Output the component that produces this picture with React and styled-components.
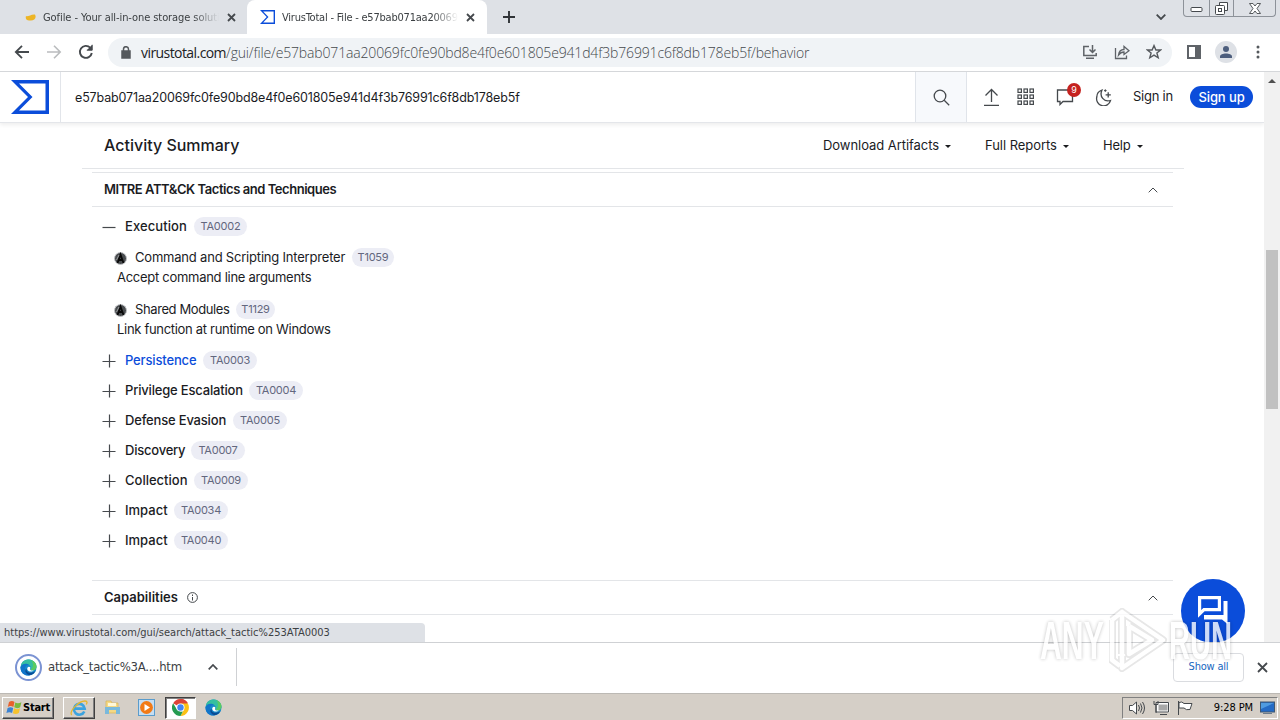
import React from 'react';
import styled, { createGlobalStyle, css } from 'styled-components';

// -------------------- Data -------------------- //

const HASH = 'e57bab071aa20069fc0fe90bd8e4f0e601805e941d4f3b76991c6f8db178eb5f';

const techniques = [
  { name: 'Command and Scripting Interpreter', width: 210, ls: -0.2, id: 'T1059', chip: 42, note: 'Accept command line arguments', noteLs: -0.28 },
  { name: 'Shared Modules', width: 94, ls: -0.4, id: 'T1129', chip: 39, note: 'Link function at runtime on Windows', noteLs: -0.31 }
];

const tactics = [
  { name: 'Persistence', width: 71, ls: -0.15, id: 'TA0003', active: true },
  { name: 'Privilege Escalation', width: 117, ls: -0.18, id: 'TA0004' },
  { name: 'Defense Evasion', width: 101, ls: -0.18, id: 'TA0005' },
  { name: 'Discovery', width: 59, ls: -0.22, id: 'TA0007' },
  { name: 'Collection', width: 62, ls: 0, id: 'TA0009' },
  { name: 'Impact', width: 42, ls: 0, id: 'TA0034' },
  { name: 'Impact', width: 42, ls: 0, id: 'TA0040' }
];

// -------------------- Shared -------------------- //

const GlobalStyle = createGlobalStyle`
  * { box-sizing: border-box; }
  body { margin: 0; background: #fff; overflow: hidden; }
  svg { display: block; flex: none; }
`;

const uiFont = css`font-family: 'DejaVu Sans Condensed', 'DejaVu Sans', sans-serif;`;

const Text = styled.span`
  flex: none;
  padding-bottom: 2px;
  white-space: nowrap;
  width: ${p => (p.$w ? `${p.$w}px` : 'auto')};
  letter-spacing: ${p => p.$ls || 0}px;
`;

// -------------------- Browser chrome -------------------- //

const Screen = styled.div`
  position: relative;
  width: 1280px;
  height: 720px;
  display: flex;
  flex-direction: column;
  overflow: hidden;
  background: #fff;
  color: #1b1c1f;
  font-family: Inter, sans-serif;
  font-size: 13px;
`;

const TabStrip = styled.div`
  height: 34px;
  display: flex;
  background: #dee1e6;
  flex: none;
`;

const Tab = styled.div`
  ${uiFont}
  width: ${p => (p.$active ? 240 : 247)}px;
  height: 34px;
  display: flex;
  align-items: center;
  padding: 0 11px 0 ${p => (p.$active ? 13 : 23)}px;
  border-radius: 8px 8px 0 0;
  background: ${p => (p.$active ? '#fff' : 'transparent')};
  color: #3c4043;
  font-size: 11px;
`;

const TabTitle = styled.span`
  width: 176px;
  margin: 0 8px 0 7px;
  overflow: hidden;
  white-space: nowrap;
  letter-spacing: ${p => p.$ls}px;
  mask-image: linear-gradient(to right, #000 150px, transparent 176px);
`;

const NewTab = styled.div`
  padding: 11px 0 0 16px;
  flex: 1;
`;

const TabSearch = styled.div`
  padding: 14px 17px 0 0;
`;

const WindowControls = styled.div`
  width: 93px;
  height: 17px;
  margin-right: 4px;
  display: flex;
  border: 1px solid #8d9299;
  border-top: 0;
  border-radius: 0 0 4px 4px;
`;

const WindowButton = styled.div`
  width: ${p => p.$w}px;
  display: flex;
  align-items: center;
  justify-content: center;
  & + & { border-left: 1px solid #8d9299; }
`;

const Toolbar = styled.div`
  height: 38px;
  display: flex;
  align-items: center;
  padding: 0 0 1px 14px;
  border-bottom: 1px solid #d5d7da;
  flex: none;
`;

const NavIcons = styled.div`
  width: 94px;
  display: flex;
  gap: 16px;
`;

const UrlBar = styled.div`
  width: 1064px;
  height: 29px;
  border-radius: 15px;
  background: #f0f3f6;
  display: flex;
  align-items: center;
  padding: 0 10px 0 13px;
`;

const Url = styled.div`
  flex: 1;
  margin-left: 10px;
  font: 300 14px 'Open Sans', sans-serif;
  letter-spacing: -0.16px;
  white-space: nowrap;
  color: #44484c;
`;

const Domain = styled.span`
  font-weight: 400;
  letter-spacing: -0.57px;
  color: #202124;
`;

const UrlIcons = styled.div`
  display: flex;
  gap: 16px;
`;

const Avatar = styled.div`
  width: 22px;
  height: 22px;
  margin: 0 19px 0 0;
  border-radius: 50%;
  background: #dee1e6;
  display: flex;
  align-items: center;
  justify-content: center;
`;

// -------------------- VirusTotal page -------------------- //

const Viewport = styled.div`
  height: 570px;
  display: flex;
  flex: none;
`;

const Page = styled.div`
  width: 1264px;
  overflow: hidden;
`;

const Header = styled.header`
  height: 51px;
  display: flex;
  align-items: center;
  border-bottom: 1px solid #e4e6ea;
  box-shadow: 0 2px 4px rgba(0, 0, 0, 0.07);
`;

const LogoBox = styled.div`
  width: 61px;
  height: 50px;
  flex: none;
  padding: 8px 0 0 11px;
  border-right: 1px solid #e2e5ea;
`;

const SearchText = styled.div`
  flex: none;
  width: 854px;
  padding-left: 14px;
  font-size: 12.5px;
  letter-spacing: -0.14px;
  white-space: nowrap;
`;

const SearchButton = styled.div`
  flex: none;
  width: 52px;
  height: 50px;
  display: flex;
  align-items: center;
  justify-content: center;
  background: #f7f9fc;
  border: solid #e0e4ea;
  border-width: 0 1px;
`;

const HeaderActions = styled.div`
  display: flex;
  align-items: center;
  padding-left: 15px;
`;

const Messages = styled.div`
  position: relative;
  margin: 0 21px 0 22px;
`;

const CountBadge = styled.span`
  position: absolute;
  left: 11px;
  top: -5px;
  width: 14px;
  height: 14px;
  border-radius: 50%;
  background: #c5221f;
  color: #fff;
  font-size: 9px;
  line-height: 14px;
  text-align: center;
`;

const SignIn = styled(Text)`
  margin-left: 20px;
`;

const SignUp = styled.div`
  width: 63px;
  height: 22px;
  margin-left: 18px;
  border-radius: 11px;
  background: #0b4dda;
  color: #fff;
  font-weight: 500;
  line-height: 22px;
  text-align: center;
  letter-spacing: -0.1px;
`;

const Summary = styled.div`
  width: 1102px;
  height: 46px;
  margin-left: 82px;
  display: flex;
  align-items: center;
  padding-left: 22px;
  border-bottom: 1px solid #e3e5e8;
`;

const SummaryTitle = styled.h2`
  width: 719px;
  margin: 0;
  padding-bottom: 1px;
  font-size: 16px;
  font-weight: 500;
`;

const Menu = styled.div`
  display: flex;
  align-items: center;
  gap: 6px;
  margin-right: 34px;
`;

const Caret = styled.span`
  margin-top: 2px;
  border: 3px solid transparent;
  border-top-color: #1b1c1f;
  border-bottom: 0;
`;

const Section = styled.section`
  width: 1081px;
  margin: ${p => p.$top}px 0 0 92px;
`;

const SectionHead = styled.div`
  height: 35px;
  display: flex;
  align-items: center;
  gap: 9px;
  padding: 0 15px 0 12px;
  border: solid #e3e5e8;
  border-width: 1px 0;
  font-weight: 600;
  svg:last-child { margin-left: auto; }
`;

const Tree = styled.div`
  padding: 4px 0 0 10px;
`;

const TacticRow = styled.div`
  height: ${p => p.$h || 30}px;
  display: flex;
  align-items: center;
  font-weight: 500;
  color: ${p => (p.$active ? '#0b4dda' : '#1b1c1f')};
  svg { margin-right: 9px; }
`;

const Chip = styled.span`
  display: inline-flex;
  justify-content: center;
  width: ${p => p.$w || 54}px;
  height: 19px;
  margin: 0 0 1px 7px;
  border-radius: 10px;
  background: #ecedf5;
  color: #63677e;
  font-size: 11px;
  font-weight: 400;
  line-height: 18px;
  letter-spacing: -0.25px;
`;

const Technique = styled.div`
  height: 52px;
  padding: 6px 0 0 12px;
`;

const TechniqueName = styled.div`
  height: 20px;
  display: flex;
  align-items: center;
  svg { margin-right: 8px; }
`;

const TechniqueNote = styled.div`
  height: 20px;
  padding-left: 3px;
  line-height: 18px;
`;

const Scrollbar = styled.div`
  width: 16px;
  background: #f1f1f1;
  padding: 7px 2px 0;
  display: flex;
  flex-direction: column;
  align-items: center;
`;

const ScrollUp = styled.span`
  border: 4px solid transparent;
  border-bottom-color: #505050;
  border-top: 0;
`;

const ScrollThumb = styled.div`
  width: 12px;
  height: 159px;
  margin-top: 167px;
  background: #c1c1c1;
`;

const ChatButton = styled.div`
  position: absolute;
  left: 1181px;
  top: 579px;
  width: 64px;
  height: 64px;
  border-radius: 50%;
  background: #0b4dda;
  padding: 15px 0 0 15px;
`;

const StatusBubble = styled.div`
  ${uiFont}
  position: absolute;
  left: 0;
  top: 623px;
  width: 425px;
  height: 19px;
  padding-left: 4px;
  border-radius: 0 4px 0 0;
  background: #dee1e6;
  color: #3c4043;
  font-size: 11px;
  line-height: 20px;
`;

// -------------------- Download shelf and taskbar -------------------- //

const Shelf = styled.div`
  ${uiFont}
  position: relative;
  height: 51px;
  display: flex;
  align-items: center;
  padding: 0 12px 2px 15px;
  border-top: 1px solid #cfd1d4;
  background: #fff;
  color: #3c4043;
  flex: none;
`;

const FileIcon = styled.div`
  width: 27px;
  height: 27px;
  margin-right: 6px;
  border: 2px solid #7b93d3;
  border-radius: 50%;
  display: flex;
  align-items: center;
  justify-content: center;
`;

const ShelfDivider = styled.div`
  width: 1px;
  height: 38px;
  margin-left: 18px;
  background: #cfd1d4;
`;

const ShowAll = styled.div`
  width: 71px;
  height: 29px;
  margin: 0 13px 0 auto;
  border: 1px solid #dadce0;
  border-radius: 4px;
  color: #1967c0;
  font-size: 11px;
  letter-spacing: -0.2px;
  line-height: 25px;
  text-align: center;
`;

const Taskbar = styled.div`
  ${uiFont}
  height: 27px;
  display: flex;
  align-items: center;
  padding: 1px 2px 0;
  border-top: 1px solid #bcb9b4;
  background: #d5cfc7;
  color: #000;
  font-size: 11px;
  flex: none;
`;

const Raised = styled.div`
  width: ${p => p.$w}px;
  height: 22px;
  display: flex;
  align-items: center;
  justify-content: center;
  border: 1px solid;
  border-color: ${p => (p.$pressed ? '#404040 #fff #fff #404040' : '#fff #404040 #404040 #fff')};
  background: ${p => (p.$pressed ? '#fff' : '#d5cfc7')};
  box-shadow: ${p => (p.$pressed ? 'inset 1px 1px 0 #808080' : 'inset -1px -1px 0 #808080')};
  margin-left: ${p => p.$gap || 0}px;
  font-weight: bold;
  letter-spacing: -0.25px;
`;

const Pinned = styled.div`
  width: 34px;
  display: flex;
  justify-content: center;
`;

const Tray = styled.div`
  width: 156px;
  height: 22px;
  margin-left: auto;
  display: flex;
  align-items: center;
  padding-left: 6px;
  border: 1px solid;
  border-color: #808080 #fff #fff #808080;
`;

const Clock = styled.span`
  width: 66px;
  padding: 0 7px 1px 0;
  letter-spacing: -0.1px;
  text-align: right;
  white-space: nowrap;
`;

const Watermark = styled.div`
  position: absolute;
  left: 1040px;
  top: 606px;
  width: 200px;
  height: 70px;
  display: flex;
  align-items: center;
  opacity: 0.8;
`;

const WatermarkWord = styled.span`
  flex: none;
  width: 62px;
  margin-right: ${p => p.$gap || 0}px;
  font: bold 53px/70px 'Liberation Sans', sans-serif;
  color: #fff;
  text-shadow: 0 0 5px rgba(0, 0, 0, 0.32);
  transform: scaleX(${p => p.$scale});
  transform-origin: left;
`;

// -------------------- Icons -------------------- //

const Svg = ({ w = 16, h, children, color = '#45494d', sw = 1.3 }) => (
  <svg width={w} height={h || w} viewBox={`0 0 ${w} ${h || w}`} fill="none" stroke={color} strokeWidth={sw}>
    {children}
  </svg>
);

const VtLogo = ({ w, h }) => (
  <svg width={w} height={h} viewBox="0 0 38 34" preserveAspectRatio="none">
    <path fill="#0b4dda" fillRule="evenodd" d="M0 0H38V34H0L17 17ZM8 3.5L21.5 17L8 30.5H34.5V3.5Z" />
  </svg>
);

const Cross = ({ s = 9, sw = 1.8, color }) => (
  <Svg w={s} sw={sw} color={color}><path d={`M1 1L${s - 1} ${s - 1}M${s - 1} 1L1 ${s - 1}`} /></Svg>
);

const Plus = ({ open }) => (
  <Svg w={14} sw={1.2}><path d={open ? 'M.5 7.5H13.5' : 'M.5 7.5H13.5M7.5 .5V13.5'} /></Svg>
);

const ChevronUp = () => <Svg w={10} h={6} sw={1}><path d="M.7 5.3L5 1L9.3 5.3" /></Svg>;

const AttackIcon = () => (
  <svg width="13" height="13" viewBox="0 0 13 13">
    <circle cx="6.5" cy="6.5" r="6" fill="#4a4d50" stroke="#c0c2c5" />
    <path d="M3.5 11L6.5 2.5L9.5 11M4.5 8H8.5" stroke="#090909" strokeWidth="1.8" fill="none" />
    <path d="M2.5 8L5 3" stroke="#9b9d9f" />
  </svg>
);

const EdgeIcon = ({ s = 17 }) => (
  <svg width={s} height={s} viewBox="0 0 18 18">
    <circle cx="9" cy="9" r="8.5" fill="#168bcb" />
    <path d="M1 7C2 2 7-.5 12 1.1C17 3 19 8 16.2 11C14 13 11 12 11 10.7C13 8.5 9.5 5 6 5.3C3.5 5.5 1.7 6.8 1 9Z" fill="#35bfa0" />
    <path d="M12 1.1C17 3 19 8 16.2 11C14.5 12.5 12 12 11.3 11C15 9 14 4 12 1.1Z" fill="#5acb62" />
    <path d="M.6 8.5C2 5 7 4 9.7 6.5C6.7 6 4.8 8.6 5.4 11.5C6 14.5 8.4 17 11 17.1C5 18.7 0 14.5.6 8.5Z" fill="#1175c9" />
    <path d="M7 10C6 14.3 12 16.3 16.3 12.8C14.8 16 11.9 17.4 10 17C6 16 4.2 12 7 10Z" fill="#0b4a94" />
    <path d="M9.4 8.2C11.4 8.2 11.1 9.7 10.6 10.5C10.5 11.7 12.4 12.6 14.8 12C12.6 14.2 8.3 13.4 7.7 10.8C7.5 9.5 8.3 8.3 9.4 8.2Z" fill="#fff" />
  </svg>
);

const WindowsFlag = () => (
  <svg width="17" height="16" viewBox="0 0 17 16">
    <path d="M3 2Q6 0 8.5 2L7.4 7Q4.5 5.2 1.8 7Z" fill="#e8612c" />
    <path d="M9.3 2.4Q12 4 15.4 2.2L14.2 7.2Q11 9 8.2 7.3Z" fill="#7aba3d" />
    <path d="M1.6 8Q4.5 6.3 7.2 8L6.1 13Q3.4 11.4.4 13Z" fill="#3c83d2" />
    <path d="M8 8.3Q11 10 14 8.2L12.8 13.1Q9.7 15 6.9 13.3Z" fill="#f6c22c" />
  </svg>
);

const IeIcon = () => (
  <svg width="18" height="18" viewBox="0 0 18 18" fill="none">
    <path d="M14.3 12.4A5.4 5.4 0 1 1 14.7 9.6H5" stroke="#3ba3df" strokeWidth="2.6" />
    <path d="M1.7 16C-1 13 8 2 15 2C18 2 17 4.2 16.3 5.5" stroke="#e5b62d" strokeWidth="1.3" />
  </svg>
);

const FolderIcon = () => (
  <svg width="17" height="17" viewBox="0 0 17 17">
    <path d="M2 2H7L8 4H14V14H2Z" fill="#f4d984" stroke="#d5b15a" strokeWidth=".7" />
    <path d="M4 4H12V7H4Z" fill="#fff8d8" />
    <path d="M1 8H16V15H12V11H5V15H1Z" fill="#79b9dc" />
  </svg>
);

const MediaIcon = () => (
  <svg width="17" height="17" viewBox="0 0 17 17">
    <rect x=".5" y=".5" width="16" height="16" fill="#c6def2" stroke="#5a9ccc" />
    <circle cx="8.5" cy="8.5" r="6.4" fill="#f27a16" />
    <path d="M6.5 5V12L12 8.5Z" fill="#fff" />
  </svg>
);

const ChromeIcon = () => (
  <svg width="17" height="17" viewBox="0 0 18 18">
    <path d="M9 9L1.2 4.5A9 9 0 0 1 16.8 4.5Z" fill="#dc4437" />
    <path d="M9 9V0A9 9 0 0 1 16.8 4.5L9 4.7Z" fill="#dc4437" />
    <path d="M9 4.8H16.9A9 9 0 0 1 9 18L12.7 11Z" fill="#fbc116" />
    <path d="M1.2 4.5L5.2 11.2L9 13.3H11.5L9 18A9 9 0 0 1 1.2 4.5Z" fill="#259b51" />
    <circle cx="9" cy="9" r="4.3" fill="#fff" />
    <circle cx="9" cy="9" r="3.4" fill="#4285f4" />
  </svg>
);

// -------------------- Component -------------------- //

const App = () => (
  <Screen>
    <GlobalStyle />

    {/* Tabs */}
    <TabStrip>
      <Tab>
        <Svg w={13} h={8} color="none"><path d="M3 3C5 4 8 1 12 1.5C14 5 11 8 7 7.5C4 8 2 6 3 3Z" fill="#edb526" /></Svg>
        <TabTitle $ls={-0.08}>Gofile - Your all-in-one storage solution</TabTitle>
        <Cross />
      </Tab>
      <Tab $active>
        <VtLogo w={15} h={14} />
        <TabTitle $ls={-0.22}>VirusTotal - File - e57bab071aa20069fc0fe</TabTitle>
        <Cross />
      </Tab>
      <NewTab><Svg w={12} sw={1.9} color="#303337"><path d="M6 0V12M0 6H12" /></Svg></NewTab>
      <TabSearch><Svg w={10} h={6} sw={1.8}><path d="M.7 .7L5 5L9.3 .7" /></Svg></TabSearch>
      <WindowControls>
        <WindowButton $w={25}><Svg w={13} h={8} sw={1}><rect x="1" y="3.5" width="11" height="4" rx="1" fill="#fff" /></Svg></WindowButton>
        <WindowButton $w={25}>
          <Svg w={13} sw={1}><path d="M4.5 3V.5H12.5V8.5H9.5" fill="#fff" /><rect x=".5" y="3.5" width="9" height="9" rx="1" fill="#fff" /><rect x="3.5" y="6.5" width="3" height="3" /></Svg>
        </WindowButton>
        <WindowButton $w={42}>
          <Svg w={12} h={11} sw={0.9}><path d="M.5 .5H4L6 3L8 .5H11.5L8 5.5L11.5 10.5H8L6 8L4 10.5H.5L4 5.5Z" fill="#fff" /></Svg>
        </WindowButton>
      </WindowControls>
    </TabStrip>

    {/* Address bar */}
    <Toolbar>
      <NavIcons>
        <Svg w={16} sw={1.8}><path d="M15 8H2M8 1.8L1.8 8L8 14.2" /></Svg>
        <Svg w={16} sw={1.6} color="#babcbe"><path d="M1 8H14M8 1.8L14.2 8L8 14.2" /></Svg>
        <Svg w={16} sw={1.9}><path d="M13.8 9A6 6 0 1 1 12.2 3.7L13.5 5" /><path d="M14.2 .8V6.2H8.8" fill="#45494d" strokeWidth="1" /></Svg>
      </NavIcons>
      <UrlBar>
        <Svg w={10} h={13} sw={1.5} color="#55595d"><rect x="1" y="5" width="8" height="7" fill="#55595d" /><path d="M2.5 5V3.2A2.5 2.5 0 0 1 7.5 3.2V5" /></Svg>
        <Url><Domain>virustotal.com</Domain>/gui/file/{HASH}/behavior</Url>
        <UrlIcons>
          <Svg w={16} sw={1.5} color="#5f6368"><path d="M7 2.5H1.8V11.5H14.2V9M4 14.3H12M10.5 1V8M7.5 5.5L10.5 8.5L13.5 5.5" /></Svg>
          <Svg w={16} sw={1.3} color="#5f6368"><path d="M1.5 4V14.5H12.5V11.5M4.5 11C5 7.3 7 5.6 10 5.5V2.5L15 6.7L10 10.5V8C7.5 8 6 9 4.5 11Z" /></Svg>
          <Svg w={16} sw={1.4} color="#55595d"><path d="M8 1.6L9.9 6H14.6L10.9 9L12.2 13.8L8 11.1L3.8 13.8L5.1 9L1.4 6H6.1Z" /></Svg>
        </UrlIcons>
      </UrlBar>
      <Svg w={43} h={14} sw={2} color="#5f6368"><path d="M16 1H28V13H16Z" /><path d="M24 1H28V13H24Z" fill="#5f6368" /></Svg>
      <Avatar><Svg w={14} h={12} color="none"><circle cx="7" cy="3" r="3" fill="#4d5e7d" /><path d="M1 12V10.5C1 6.5 13 6.5 13 10.5V12Z" fill="#4d5e7d" /></Svg></Avatar>
      <Svg w={4} h={14} color="none"><g fill="#55595d"><circle cx="2" cy="2" r="1.5" /><circle cx="2" cy="7" r="1.5" /><circle cx="2" cy="12" r="1.5" /></g></Svg>
    </Toolbar>

    {/* Page */}
    <Viewport>
      <Page>
        <Header>
          <LogoBox><VtLogo w={38} h={34} /></LogoBox>
          <SearchText>{HASH}</SearchText>
          <SearchButton><Svg w={17}><circle cx="7" cy="7" r="5.8" /><path d="M11.2 11.2L16.2 16.2" /></Svg></SearchButton>
          <HeaderActions>
            <Svg w={18} h={18}><path d="M2 17.3H17M9.5 14V1.5M3.5 7.5L9.5 1.5L15.5 7.5" /></Svg>
            <Svg w={34} h={18} sw={1.2}>
              {[1, 7, 13].map(y => [18, 24, 30].map(x => <rect key={`${x}-${y}`} x={x} y={y} width="3.4" height="3.4" />))}
            </Svg>
            <Messages>
              <Svg w={18} h={18}><path d="M1.5 2H16.5V13.5H7L4 16.5V13.5H1.5Z" /></Svg>
              <CountBadge>9</CountBadge>
            </Messages>
            <Svg w={18} h={18}><path d="M7 2C4 3 1.8 5.8 1.8 9A7 7 0 0 0 15.5 12.5C9 14.5 4 8.5 7 2Z" /><path d="M13.2 4.2V9.4M10.6 6.8H15.8" /><path d="M10.3 1.3V3.9M9 2.6H11.6" strokeWidth="1" /></Svg>
            <SignIn $w={39} $ls={-0.25}>Sign in</SignIn>
            <SignUp>Sign up</SignUp>
          </HeaderActions>
        </Header>

        <Summary>
          <SummaryTitle>Activity Summary</SummaryTitle>
          <Menu><Text $w={116} $ls={-0.05}>Download Artifacts</Text><Caret /></Menu>
          <Menu><Text $w={72} $ls={-0.05}>Full Reports</Text><Caret /></Menu>
          <Menu><Text $w={28} $ls={-0.2}>Help</Text><Caret /></Menu>
        </Summary>

        <Section $top={3}>
          <SectionHead><Text $ls={-0.45}>MITRE ATT&amp;CK Tactics and Techniques</Text><ChevronUp /></SectionHead>
          <Tree>
            <TacticRow $h={31}><Plus open /><Text $w={62} $ls={0.08}>Execution</Text><Chip $w={53}>TA0002</Chip></TacticRow>
            {techniques.map(t => (
              <Technique key={t.id}>
                <TechniqueName><AttackIcon /><Text $w={t.width} $ls={t.ls}>{t.name}</Text><Chip $w={t.chip}>{t.id}</Chip></TechniqueName>
                <TechniqueNote><Text $ls={t.noteLs}>{t.note}</Text></TechniqueNote>
              </Technique>
            ))}
            {tactics.map(t => (
              <TacticRow key={t.id} $active={t.active}><Plus /><Text $w={t.width} $ls={t.ls}>{t.name}</Text><Chip>{t.id}</Chip></TacticRow>
            ))}
          </Tree>
        </Section>

        <Section $top={24}>
          <SectionHead>
            <Text>Capabilities</Text>
            <Svg w={11} sw={1}><circle cx="5.5" cy="5.5" r="4.9" /><path d="M5.5 5V8.5M5.5 2.5V4" /></Svg>
            <ChevronUp />
          </SectionHead>
        </Section>
      </Page>
      <Scrollbar><ScrollUp /><ScrollThumb /></Scrollbar>
    </Viewport>

    <ChatButton>
      <svg width="34" height="34" viewBox="0 0 34 34">
        <path d="M3.6 3.6H23.4V15.6H8L3.6 20Z" fill="none" stroke="#fff" strokeWidth="3.2" />
        <path d="M27.5 7H31.5V30L26 25.5H8V21H27.5Z" fill="#fff" />
      </svg>
    </ChatButton>
    <StatusBubble><Text>https://www.virustotal.com/gui/search/attack_tactic%253ATA0003</Text></StatusBubble>

    {/* Downloads */}
    <Shelf>
      <FileIcon><EdgeIcon s={17} /></FileIcon>
      <Text $w={160} $ls={-0.25}>attack_tactic%3A....htm</Text>
      <Svg w={10} h={6} sw={1.7}><path d="M.7 5.3L5 1L9.3 5.3" /></Svg>
      <ShelfDivider />
      <ShowAll>Show all</ShowAll>
      <Cross s={11} />
    </Shelf>

    <Taskbar>
      <Raised $w={52}><WindowsFlag />Start</Raised>
      <Raised $w={32} $gap={9}><IeIcon /></Raised>
      <Pinned><FolderIcon /></Pinned>
      <Pinned><MediaIcon /></Pinned>
      <Raised $w={31} $gap={2} $pressed><ChromeIcon /></Raised>
      <Pinned><EdgeIcon /></Pinned>
      <Tray>
        <Svg w={17} h={16} sw={1}><path d="M.5 5.5H3.5L7.5 2V14L3.5 10.5H.5Z" fill="#fff" /><path d="M9.5 5Q11.5 8 9.5 11M11.5 3.5Q14.5 8 11.5 12.5M13.5 2Q17.5 8 13.5 14" /></Svg>
        <Svg w={24} h={16} sw={1}><rect x="11.5" y="3.5" width="11" height="8" fill="#a8a8a8" stroke="#fff" strokeWidth="2" /><path d="M10 2.5H22.5V12H10ZM14 14.5H21" /><path d="M8 1V4.5H12V1M10 5V13" /></Svg>
        <Svg w={24} h={16} sw={1}><path d="M8.5 1V15" /><path d="M9 2.5Q12 1 14 3.5H22L20 9.5Q16 10.5 14 8H9Z" fill="#fff" /></Svg>
        <Clock>9:28 PM</Clock>
        <svg width="15" height="14" viewBox="0 0 15 14"><rect x=".5" y="1" width="14" height="10" fill="#246bc5" stroke="#3f5872" /><path d="M1 2H14L1 8Z" fill="#4f9be0" /><path d="M3 12.5H12" stroke="#6d7c8b" /></svg>
      </Tray>
    </Taskbar>

    <Watermark>
      <WatermarkWord $scale={0.57} $gap={7}>ANY</WatermarkWord>
      <svg width="60" height="66" viewBox="0 0 60 66" fill="none" stroke="#fff" strokeWidth="4.5" strokeLinejoin="round">
        <path d="M13 4L54 32L13 60V48M20 18V46L43 32L20 18M3 12V52L11 58M3 12L13 4V46" stroke="rgba(0,0,0,.12)" strokeWidth="8" />
        <path d="M13 4L54 32L13 60V48M20 18V46L43 32L20 18M3 12V52L11 58M3 12L13 4V46" />
      </svg>
      <WatermarkWord $scale={0.55}>RUN</WatermarkWord>
    </Watermark>
  </Screen>
);

export default App;
